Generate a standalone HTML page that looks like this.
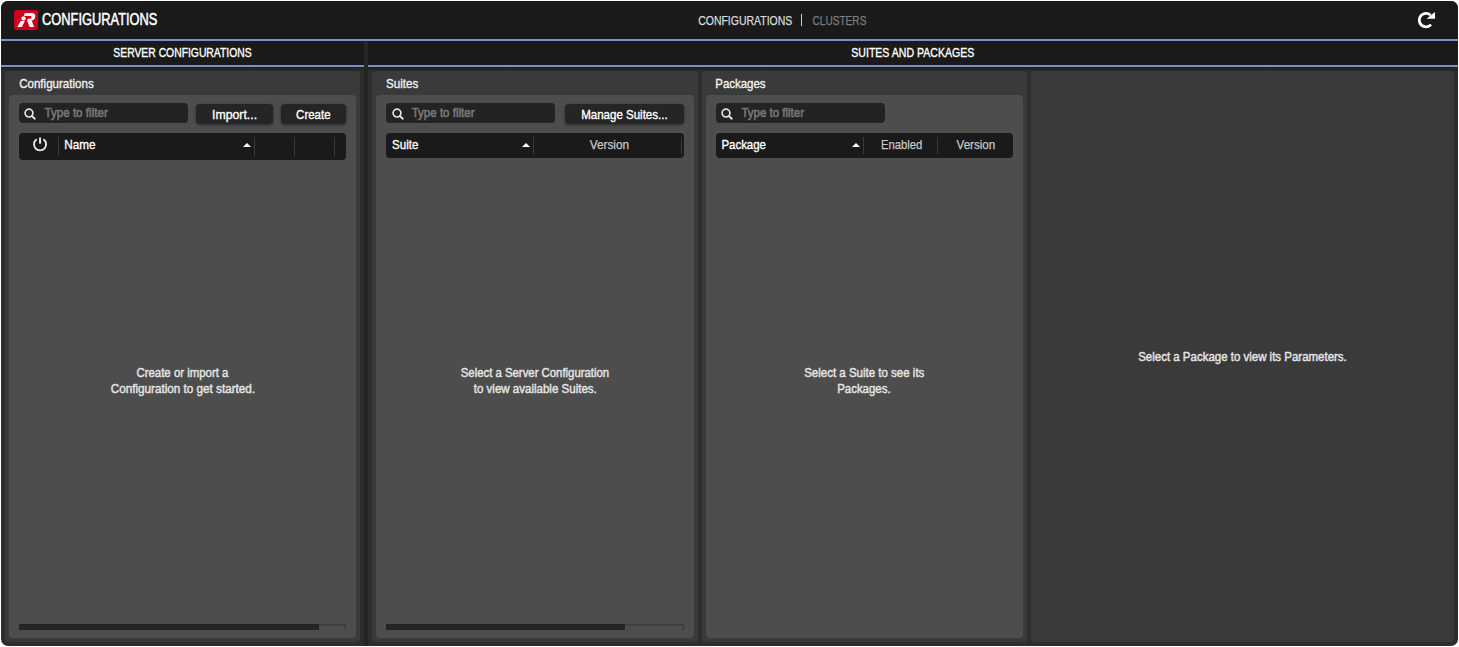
<!DOCTYPE html>
<html lang="en">
<head>
<meta charset="utf-8">
<title>Configurations</title>
<style>
html,body{margin:0;padding:0;background:#ffffff;width:1459px;height:647px;overflow:hidden}
body{font-family:"Liberation Sans",Arial,sans-serif;position:relative}
#app{position:absolute;left:1px;top:1px;width:1457px;height:645px;border-radius:7px;overflow:hidden;background:#2d2d2d}
#in{position:absolute;left:-1px;top:-1px;width:1459px;height:647px}
#in div,#in span,#in svg{position:absolute;box-sizing:border-box}
.tx{white-space:nowrap;transform-origin:0 0;display:block;font-weight:400;-webkit-text-stroke:0.35px currentColor}
/* top header */
#hdr{left:0;top:0;width:1459px;height:39px;background:#1a1a1a}
.blue{background:#7790c7;height:2px}
.bar{background:#1a1a1a;top:41px;height:24px}
.gap{background:#252525;left:364px;width:4px}
.shade{height:4px;top:67px;background:linear-gradient(#1e1e1e,#2d2d2d)}
.outer{background:#3a3a3a;border-radius:4px;top:71px;height:571px}
.inner{background:#4d4d4d;border-radius:4px;top:95px;height:543px}
.inp{background:#232323;border-radius:4px;top:103px;height:20px}
.btn{background:#252525;border-radius:4px;top:104px;height:20px;box-shadow:0 1px 3px rgba(0,0,0,.45)}
.th{background:#1a1a1a;border-radius:4px;top:133px}
.sep{background:#353a3c;width:1px;top:137px}
.arr{width:0;height:0;border-left:4.3px solid transparent;border-right:4.3px solid transparent;border-bottom:4.5px solid #ffffff;top:142.6px;margin-left:-0.3px}
.sbt{top:624px;height:6px;background:transparent;box-shadow:inset -1px 1px 2px rgba(0,0,0,.3)}
.sbh{top:624px;height:6px;background:#242626}
#t_title{left:0;top:10px;font-size:16px;line-height:20px;color:#ffffff;transform:translateX(42.05px) scaleX(0.8025)}
#t_nav1{left:0;top:13px;font-size:13px;line-height:16px;color:#dcdcdc;transform:translateX(698.16px) scaleX(0.8062)}
#t_nav2{left:0;top:13px;font-size:13px;line-height:16px;color:#7c7c7c;transform:translateX(812.50px) scaleX(0.7770)}
#t_sec1{left:0;top:45px;font-size:13px;line-height:16px;color:#ffffff;transform:translateX(113.37px) scaleX(0.7963)}
#t_sec2{left:0;top:45px;font-size:13px;line-height:16px;color:#ffffff;transform:translateX(851.29px) scaleX(0.8118)}
#t_p1{left:0;top:76px;font-size:13px;line-height:16px;color:#f2f2f2;transform:translateX(19.14px) scaleX(0.8896)}
#t_p2{left:0;top:76px;font-size:13px;line-height:16px;color:#f2f2f2;transform:translateX(386.07px) scaleX(0.8912)}
#t_p3{left:0;top:76px;font-size:13px;line-height:16px;color:#f2f2f2;transform:translateX(715.33px) scaleX(0.8797)}
#t_f1{left:0;top:105px;font-size:13px;line-height:16px;color:#777777;transform:translateX(44.42px) scaleX(0.8951)}
#t_f2{left:0;top:105px;font-size:13px;line-height:16px;color:#777777;transform:translateX(411.68px) scaleX(0.8878)}
#t_f3{left:0;top:105px;font-size:13px;line-height:16px;color:#777777;transform:translateX(741.44px) scaleX(0.8834)}
#t_b1{left:0;top:107px;font-size:13px;line-height:16px;color:#ffffff;transform:translateX(212.05px) scaleX(0.9443)}
#t_b2{left:0;top:107px;font-size:13px;line-height:16px;color:#ffffff;transform:translateX(296.10px) scaleX(0.8834)}
#t_b3{left:0;top:107px;font-size:13px;line-height:16px;color:#ffffff;transform:translateX(581.23px) scaleX(0.8854)}
#t_h1{left:0;top:137px;font-size:13px;line-height:16px;color:#ffffff;transform:translateX(64.32px) scaleX(0.9024)}
#t_h2{left:0;top:137px;font-size:13px;line-height:16px;color:#ffffff;transform:translateX(392.07px) scaleX(0.8860)}
#t_h3{left:0;top:137px;font-size:13px;line-height:16px;color:#c8c8c8;transform:translateX(589.69px) scaleX(0.9095)}
#t_h4{left:0;top:137px;font-size:13px;line-height:16px;color:#ffffff;transform:translateX(721.42px) scaleX(0.8807)}
#t_h5{left:0;top:137px;font-size:13px;line-height:16px;color:#c8c8c8;transform:translateX(881.06px) scaleX(0.8644)}
#t_h6{left:0;top:137px;font-size:13px;line-height:16px;color:#c8c8c8;transform:translateX(956.55px) scaleX(0.8935)}
#t_m1a{left:0;top:365px;font-size:13px;line-height:16px;color:#e4e4e4;transform:translateX(136.48px) scaleX(0.8773)}
#t_m1b{left:0;top:381px;font-size:13px;line-height:16px;color:#e4e4e4;transform:translateX(110.73px) scaleX(0.9001)}
#t_m2a{left:0;top:365px;font-size:13px;line-height:16px;color:#e4e4e4;transform:translateX(460.78px) scaleX(0.8735)}
#t_m2b{left:0;top:381px;font-size:13px;line-height:16px;color:#e4e4e4;transform:translateX(473.74px) scaleX(0.8868)}
#t_m3a{left:0;top:365px;font-size:13px;line-height:16px;color:#e4e4e4;transform:translateX(804.20px) scaleX(0.8843)}
#t_m3b{left:0;top:381px;font-size:13px;line-height:16px;color:#e4e4e4;transform:translateX(837.16px) scaleX(0.8810)}
#t_m4{left:0;top:349px;font-size:13px;line-height:16px;color:#e4e4e4;transform:translateX(1138.21px) scaleX(0.8828)}
#t_f1,#t_f2,#t_f3{-webkit-text-stroke:0.6px currentColor}
#t_title{-webkit-text-stroke:0.5px currentColor}
#t_m1a,#t_m1b,#t_m2a,#t_m2b,#t_m3a,#t_m3b,#t_m4{-webkit-text-stroke:0.45px currentColor}
#t_nav1,#t_nav2,#t_h3,#t_h5,#t_h6{-webkit-text-stroke:0.25px currentColor}
</style>
</head>
<body>
<div id="app"><div id="in">

<div id="hdr"></div>
<div class="blue" style="left:0;top:39px;width:1459px"></div>
<div class="bar" style="left:0;width:364px"></div>
<div class="bar" style="left:368px;width:1091px"></div>
<div class="gap" style="top:41px;height:26px"></div>
<div class="blue" style="left:0;top:65px;width:364px"></div>
<div class="blue" style="left:368px;top:65px;width:1091px"></div>
<div class="shade" style="left:0;width:364px"></div>
<div class="shade" style="left:368px;width:1091px"></div>
<div class="gap" style="top:67px;height:580px"></div>

<!-- logo -->
<svg id="logo" style="left:14px;top:10px" width="24" height="20" viewBox="0 0 24 20">
<rect x="0" y="0" width="24" height="20" rx="3" ry="3" fill="#d0021b"/>
<path fill="#f6f6f6" d="M10.9 3.1H17.8C20.6 3.1 21.7 4.8 21.2 7C20.8 9.1 19.4 10.2 17.7 10.6L20.1 16.9H15.6L13.1 10.7L13.9 8.8H16.2C16.9 8.8 17.4 8.3 17.5 7.5C17.6 6.6 17.2 6 16.4 6H9.8Z"/>
<path d="M6.7 10.9H10.8L7.9 16.9H3.3z" fill="#f6f6f6"/>
<circle cx="9.5" cy="8.5" r="2.15" fill="#f6f6f6"/>
</svg>
<span class="tx" id="t_title">CONFIGURATIONS</span>
<span class="tx" id="t_nav1">CONFIGURATIONS</span>
<div style="left:801px;top:14px;width:1px;height:12px;background:#d0d0d0"></div>
<span class="tx" id="t_nav2">CLUSTERS</span>
<!-- refresh -->
<svg id="refresh" style="left:1409px;top:4px" width="36" height="32" viewBox="0 0 36 32"><path d="M21.60 11.16A6.75 6.75 0 1 0 22.02 20.62" fill="none" stroke="#ffffff" stroke-width="2.8"/><path d="M26 7.9V14.85H17.6Z" fill="#ffffff"/></svg>

<span class="tx" id="t_sec1">SERVER CONFIGURATIONS</span>
<span class="tx" id="t_sec2">SUITES AND PACKAGES</span>

<!-- SERVER CONFIGURATIONS panel -->
<div class="outer" style="left:5px;width:355px"></div>
<div class="inner" style="left:9px;width:347px"></div>
<span class="tx" id="t_p1">Configurations</span>
<div class="inp" style="left:19px;width:169px"></div>
<svg class="mag" style="left:23px;top:106.5px" width="15" height="15" viewBox="0 0 15 15"><circle cx="6" cy="6.1" r="3.9" fill="none" stroke="#e2e2e2" stroke-width="1.7"/><path d="M8.9 9l3.4 3.3" stroke="#e2e2e2" stroke-width="1.9" fill="none"/></svg>
<span class="tx" id="t_f1">Type to filter</span>
<div class="btn" style="left:196px;width:77px"></div>
<div class="btn" style="left:281px;width:65px"></div>
<span class="tx" id="t_b1">Import...</span>
<span class="tx" id="t_b2">Create</span>
<div class="th" style="left:19px;width:327px;height:27px"></div>
<svg id="power" style="left:32px;top:136px" width="16" height="17" viewBox="0 0 16 17"><path d="M4.75 3.22A6.05 6.05 0 1 0 11.35 3.22" fill="none" stroke="#e8e8e8" stroke-width="1.9"/><rect x="7.05" y="1.5" width="2" height="6.2" fill="#e8e8e8"/></svg>
<div class="sep" style="left:58px;height:19px"></div>
<span class="tx" id="t_h1">Name</span>
<div class="arr" style="left:243px"></div>
<div class="sep" style="left:254px;height:19px"></div>
<div class="sep" style="left:294px;height:19px"></div>
<div class="sep" style="left:334px;height:19px"></div>
<span class="tx" id="t_m1a">Create or import a</span>
<span class="tx" id="t_m1b">Configuration to get started.</span>
<div class="sbt" style="left:19px;width:327px"></div>
<div class="sbh" style="left:19px;width:300px"></div>

<!-- Suites panel -->
<div class="outer" style="left:372px;width:326px"></div>
<div class="inner" style="left:376px;width:318px"></div>
<span class="tx" id="t_p2">Suites</span>
<div class="inp" style="left:386px;width:169px"></div>
<svg class="mag" style="left:390.7px;top:106.5px" width="15" height="15" viewBox="0 0 15 15"><circle cx="6" cy="6.1" r="3.9" fill="none" stroke="#e2e2e2" stroke-width="1.7"/><path d="M8.9 9l3.4 3.3" stroke="#e2e2e2" stroke-width="1.9" fill="none"/></svg>
<span class="tx" id="t_f2">Type to filter</span>
<div class="btn" style="left:565px;width:119px"></div>
<span class="tx" id="t_b3">Manage Suites...</span>
<div class="th" style="left:386px;width:298px;height:25px"></div>
<span class="tx" id="t_h2">Suite</span>
<div class="arr" style="left:522px"></div>
<div class="sep" style="left:533px;height:17px"></div>
<span class="tx" id="t_h3">Version</span>
<div class="sep" style="left:681px;height:17px"></div>
<span class="tx" id="t_m2a">Select a Server Configuration</span>
<span class="tx" id="t_m2b">to view available Suites.</span>
<div class="sbt" style="left:386px;width:298px"></div>
<div class="sbh" style="left:386px;width:239px"></div>

<!-- Packages panel -->
<div class="outer" style="left:702px;width:325px"></div>
<div class="inner" style="left:706px;width:317px"></div>
<span class="tx" id="t_p3">Packages</span>
<div class="inp" style="left:716px;width:169px"></div>
<svg class="mag" style="left:720px;top:106.5px" width="15" height="15" viewBox="0 0 15 15"><circle cx="6" cy="6.1" r="3.9" fill="none" stroke="#e2e2e2" stroke-width="1.7"/><path d="M8.9 9l3.4 3.3" stroke="#e2e2e2" stroke-width="1.9" fill="none"/></svg>
<span class="tx" id="t_f3">Type to filter</span>
<div class="th" style="left:716px;width:297px;height:25px"></div>
<span class="tx" id="t_h4">Package</span>
<div class="arr" style="left:852px"></div>
<div class="sep" style="left:863px;height:17px"></div>
<span class="tx" id="t_h5">Enabled</span>
<div class="sep" style="left:937px;height:17px"></div>
<span class="tx" id="t_h6">Version</span>
<span class="tx" id="t_m3a">Select a Suite to see its</span>
<span class="tx" id="t_m3b">Packages.</span>

<!-- Parameters panel -->
<div class="outer" style="left:1031px;width:423px"></div>
<span class="tx" id="t_m4">Select a Package to view its Parameters.</span>

</div></div>
</body>
</html>
